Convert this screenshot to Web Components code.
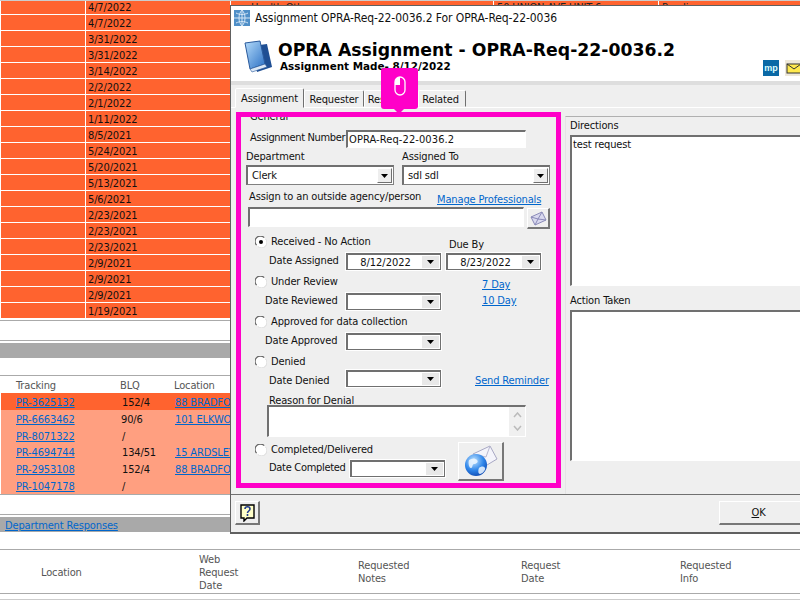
<!DOCTYPE html>
<html lang="en">
  <head>
    <meta charset="UTF-8" />
    <title>OPRA Assignment</title>
    <style>
      html, body { margin: 0; padding: 0; background: #fff; }
      body { width: 800px; height: 600px; overflow: hidden; position: relative; font: 11px 'DejaVu Sans Condensed', 'DejaVu Sans', sans-serif; font-stretch: condensed; letter-spacing: -0.14px; color: #111; }
    </style>
  </head>
  <body>
    <date-table></date-table>
    <gray-bar top="19" gap="2"></gray-bar>
    <tracking-table></tracking-table>
    <gray-bar top="19" gap="2" link="Department Responses"></gray-bar>
    <request-head></request-head>
    <assign-dialog></assign-dialog>
    <focus-frame></focus-frame>

    <script type="text/javascript">
      const LINK = 'color:#0066cc;text-decoration:underline;'

      class DateTable extends HTMLElement {
        constructor() {
          super()
          const dates = ['4/7/2022', '4/7/2022', '3/31/2022', '3/31/2022', '3/14/2022', '2/2/2022', '2/1/2022', '1/11/2022', '8/5/2021', '5/24/2021', '5/20/2021', '5/13/2021', '5/6/2021', '2/23/2021', '2/23/2021', '2/23/2021', '2/9/2021', '2/9/2021', '2/9/2021', '1/19/2021']
          const rows = dates
            .map((d, i) => {
              const extra = i === 0 ? ['Health Other', '50 UNION AVE UNIT 6', 'Pending'] : ['', '', '']
              return `<div class="row"><i></i><span>${d}</span><span class="x" style="padding-left:20px">${extra[0]}</span><span class="x">${extra[1]}</span><span class="x">${extra[2]}</span></div>`
            })
            .join('')
          this.attachShadow({ mode: 'open' })
          this.shadowRoot.innerHTML = `
            <style>
              :host { display: block; border-top: 1px solid #ccc; border-bottom: 1px solid #aaa; padding-left: 1px; height: 319px; }
              .row { display: grid; grid-template-columns: 84px 145px 263px 165px 1fr; height: 16px; background: #ff632f; border-bottom: 1px solid #fff; box-sizing: border-box; line-height: 17px; }
              .row:first-of-type { height: 14px; line-height: 14px; }
              .row > * { padding-left: 2px; border-left: 1px solid #fff; overflow: hidden; white-space: nowrap; }
              .row > i { border-left: 0; }
              .x { padding-left: 3px; color: #222; }
            </style>
            ${rows}
          `
        }
      }
      customElements.define('date-table', DateTable)

      class GrayBar extends HTMLElement {
        constructor() {
          super()
          this.attachShadow({ mode: 'open' })
        }
        connectedCallback() {
          const link = this.getAttribute('link')
          this.shadowRoot.innerHTML = `
            <style>
              :host { display: block; }
              .line { border-top: 1px solid #aaa; margin-top: ${this.getAttribute('top')}px; }
              .bar { background: #a9a9a9; height: 15px; margin-top: ${this.getAttribute('gap')}px; line-height: 17px; padding-left: 5px; }
              a { ${LINK} }
            </style>
            <div class="line"></div>
            <div class="bar">${link ? `<a href="#">${link}</a>` : ''}</div>
          `
        }
      }
      customElements.define('gray-bar', GrayBar)

      class TrackingTable extends HTMLElement {
        constructor() {
          super()
          const data = [
            ['PR-3625132', '152/4', '88 BRADFORD', 2],
            ['PR-6663462', '90/6', '101 ELKWOOD', 1],
            ['PR-8071322', '/', '', 2],
            ['PR-4694744', '134/51', '15 ARDSLEY', 2],
            ['PR-2953108', '152/4', '88 BRADFORD', 2],
            ['PR-1047178', '/', '', 2],
          ]
          const rows = data
            .map(
              (r, i) => `<div class="row ${i === 0 ? 'hot' : ''}"><a href="#">${r[0]}</a><span style="padding-left:${r[3]}px">${r[1]}</span><a href="#" class="addr">${r[2]}</a></div>`
            )
            .join('')
          this.attachShadow({ mode: 'open' })
          this.shadowRoot.innerHTML = `
            <style>
              :host { display: block; margin-top: 17px; border-top: 1px solid #aaa; padding-left: 1px; border-bottom: 1px solid #aaa; }
              .head, .row { display: grid; grid-template-columns: 104px 54px 1fr; padding-left: 15px; white-space: nowrap; overflow: hidden; }
              .head { height: 17px; line-height: 19px; color: #555; }
              .row { height: 16.8px; line-height: 19px; background: #ff9f80; }
              .row.hot { background: #ff632f; }
              a { ${LINK} justify-self: start; }
              .addr { margin-left: 1px; }
            </style>
            <div class="head"><span>Tracking</span><span>BLQ</span><span>Location</span></div>
            ${rows}
          `
        }
      }
      customElements.define('tracking-table', TrackingTable)

      class RequestHead extends HTMLElement {
        constructor() {
          super()
          this.attachShadow({ mode: 'open' })
          this.shadowRoot.innerHTML = `
            <style>
              :host { display: grid; grid-template-columns: 199px 159px 163px 159px 1fr; align-items: center; margin-top: 17px; height: 43px; box-sizing: content-box; border-top: 1px solid #aaa; border-bottom: 1px solid #aaa; color: #555; line-height: 13px; }
              span { position: relative; top: 1px; }
              span:first-of-type { padding-left: 41px; }
              :host::after { content: ''; position: absolute; left: 0; right: 0; top: 599px; border-top: 1px solid #ccc; }
            </style>
            <span>Location</span>
            <span>Web<br />Request<br />Date</span>
            <span>Requested<br />Notes</span>
            <span>Request<br />Date</span>
            <span>Requested<br />Info</span>
          `
        }
      }
      customElements.define('request-head', RequestHead)

      const SUNKEN = 'border-style:solid;border-width:2px 1px 1px 2px;border-color:#707070 #fff #fff #707070;box-sizing:border-box;background:#fff;'
      const ARROW = `<svg width="7" height="4" viewBox="0 0 7 4"><path d="M0 0h7L3.5 4z" fill="#000"/></svg>`

      class WinSelect extends HTMLElement {
        constructor() {
          super()
          this.attachShadow({ mode: 'open' })
          this.shadowRoot.innerHTML = `
            <style>
              :host { ${SUNKEN} display: flex; align-items: center; width: 148px; height: 20px; border-right-color: #808080; border-bottom-color: #808080; }
              .t { flex: 1; padding-left: 4px; white-space: nowrap; overflow: hidden; }
              .b { width: 15px; height: 15px; background: #eee; border: 1px solid; border-color: #fff #707070 #707070 #fff; display: flex; align-items: center; justify-content: center; box-sizing: border-box; margin-right: 1px; }
            </style>
            <span class="t"><slot></slot></span>
            <span class="b">${ARROW}</span>
          `
        }
      }
      customElements.define('win-select', WinSelect)

      class WinDate extends HTMLElement {
        constructor() {
          super()
          this.attachShadow({ mode: 'open' })
          this.shadowRoot.innerHTML = `
            <style>
              :host { ${SUNKEN} display: flex; align-items: center; flex: none; width: 95px; height: 17px; border-right-color: #707070; border-bottom-color: #707070; outline: 1px solid #fff; outline-offset: 0; }
              .t { flex: 1; text-align: center; white-space: nowrap; padding-left: 1px; line-height: 13px; letter-spacing: 0; }
              .b { width: 17px; height: 12px; background: #e8e8e8; display: flex; align-items: center; justify-content: center; margin-right: 1px; }
            </style>
            <span class="t"><slot></slot></span>
            <span class="b">${ARROW}</span>
          `
        }
      }
      customElements.define('win-date', WinDate)

      class WinRadio extends HTMLElement {
        constructor() {
          super()
          this.attachShadow({ mode: 'open' })
          const dot = this.hasAttribute('checked') ? '<circle cx="6" cy="6" r="2" fill="#000"/>' : ''
          this.shadowRoot.innerHTML = `
            <style>
              :host { display: flex; align-items: center; height: 12px; gap: 4px; margin-top: 1px; white-space: nowrap; }
              svg { flex: none; }
            </style>
            <svg width="12" height="12" viewBox="0 0 12 12">
              <circle cx="6" cy="6" r="5.5" fill="#fff"/>
              <path d="M1.6 9.2A5.3 5.3 0 0 1 9.2 1.6" fill="none" stroke="#666" stroke-width="1.2"/>
              <path d="M10.4 2.8A5.3 5.3 0 0 1 2.8 10.4" fill="none" stroke="#ddd" stroke-width="1"/>
              ${dot}
            </svg>
            <slot></slot>
          `
        }
      }
      customElements.define('win-radio', WinRadio)

      class WinTabs extends HTMLElement {
        constructor() {
          super()
          this.attachShadow({ mode: 'open' })
          this.shadowRoot.innerHTML = `
            <style>
              :host { display: flex; align-items: flex-end; height: 20px; padding-left: 4px; line-height: 18px; }
              span { display: block; height: 17px; box-sizing: border-box; border: 1px solid; border-color: #fff #707070 transparent #fff; border-radius: 2px 2px 0 0; text-align: center; }
              .on { height: 20px; line-height: 19px; background: #efefef; position: relative; top: 1px; z-index: 1; }
            </style>
            <span class="on" style="width:69px">Assignment</span>
            <span style="width:60px">Requester</span>
            <span style="width:54px">Response</span>
            <span style="width:48px;padding-right:3px">Related</span>
          `
        }
      }
      customElements.define('win-tabs', WinTabs)

      class AssignForm extends HTMLElement {
        constructor() {
          super()
          this.attachShadow({ mode: 'open' })
          this.shadowRoot.innerHTML = `
            <style>
              :host { display: block; width: 325px; padding-top: 3px; flex: none; line-height: 12px; }
              .r { display: flex; align-items: flex-start; white-space: nowrap; }
              a { ${LINK} }
              .in { ${SUNKEN} line-height: 15px; padding-left: 1px; letter-spacing: 0.1px; }
              .lb { display: block; flex: none; padding-top: 2px; }
            </style>
            <div class="r" style="height:12px;padding-left:14px">General</div>

            <div class="r" style="height:18px;margin-top:7px;padding-left:14px">
              <span style="width:96px;padding-top:2px;letter-spacing:-0.35px">Assignment Number</span>
              <span class="in" style="width:180px;height:18px">OPRA-Req-22-0036.2</span>
            </div>

            <div class="r" style="height:12px;margin-top:2px;padding-left:10px">
              <span style="width:156px;padding-top:1px">Department</span><span style="padding-top:1px">Assigned To</span>
            </div>

            <div class="r" style="height:20px;margin-top:3px;padding-left:10px;gap:8px">
              <win-select>Clerk</win-select><win-select>sdl sdl</win-select>
            </div>

            <div class="r" style="height:14px;margin-top:5px;padding-left:13px">
              <span style="width:188px;padding-top:1px">Assign to an outside agency/person</span>
              <a href="#" style="margin-top:4px">Manage Professionals</a>
            </div>

            <div class="r" style="height:22px;margin-top:3px;padding-left:12px">
              <span class="in" style="width:276px;height:20px"></span>
              <mail-button style="margin:1px 0 0 3px"></mail-button>
            </div>

            <div class="r" style="height:16px;margin-top:6px;padding-left:19px">
              <win-radio checked style="width:194px">Received - No Action</win-radio>
              <span style="margin-top:4px">Due By</span>
            </div>

            <div class="r" style="height:16px;margin-top:2px;padding-left:33px">
              <span class="lb" style="width:77px">Date Assigned</span>
              <win-date>8/12/2022</win-date>
              <win-date style="margin-left:5px">8/23/2022</win-date>
            </div>

            <div class="r" style="height:16px;margin-top:6px;padding-left:19px">
              <win-radio style="width:227px">Under Review</win-radio>
              <a href="#" style="margin-top:4px">7 Day</a>
            </div>

            <div class="r" style="height:16px;margin-top:2px;padding-left:29px">
              <span class="lb" style="width:81px">Date Reviewed</span>
              <win-date></win-date>
              <a href="#" style="margin:2px 0 0 41px">10 Day</a>
            </div>

            <div class="r" style="height:12px;margin-top:6px;padding-left:19px">
              <win-radio>Approved for data collection</win-radio>
            </div>

            <div class="r" style="height:16px;margin-top:6px;padding-left:29px">
              <span class="lb" style="width:81px">Date Approved</span>
              <win-date></win-date>
            </div>

            <div class="r" style="height:12px;margin-top:6px;padding-left:19px">
              <win-radio>Denied</win-radio>
            </div>

            <div class="r" style="height:16px;margin-top:3px;padding-left:33px">
              <span class="lb" style="width:77px;padding-top:5px">Date Denied</span>
              <win-date></win-date>
              <a href="#" style="margin:5px 0 0 34px">Send Reminder</a>
            </div>

            <div class="r" style="height:11px;margin-top:8px;padding-left:33px;padding-top:1px;box-sizing:border-box">Reason for Denial</div>

            <div class="r" style="height:32px;padding-left:31px">
              <scroll-box style="width:259px;height:32px"></scroll-box>
            </div>

            <div class="r" style="height:39px;margin-top:5px">
              <div style="width:222px;flex:none">
                <div class="r" style="height:12px;margin-top:1px;padding-left:19px">
                  <win-radio>Completed/Delivered</win-radio>
                </div>
                <div class="r" style="height:16px;margin-top:5px;padding-left:33px">
                  <span class="lb" style="width:81px;letter-spacing:-0.3px">Date Completed</span>
                  <win-date></win-date>
                </div>
              </div>
              <send-button></send-button>
            </div>
          `
        }
      }
      customElements.define('assign-form', AssignForm)

      class ScrollBox extends HTMLElement {
        constructor() {
          super()
          this.attachShadow({ mode: 'open' })
          this.shadowRoot.innerHTML = `
            <style>
              :host { ${SUNKEN} display: flex; justify-content: flex-end; }
              .s { width: 16px; background: #f0f0f0; display: flex; flex-direction: column; justify-content: space-between; align-items: center; padding: 5px 0; box-sizing: border-box; }
            </style>
            <div class="s">
              <svg width="9" height="6"><path d="M1 5l3.5-4L8 5" fill="none" stroke="#bbb" stroke-width="1.5"/></svg>
              <svg width="9" height="6"><path d="M1 1l3.5 4L8 1" fill="none" stroke="#bbb" stroke-width="1.5"/></svg>
            </div>
          `
        }
      }
      customElements.define('scroll-box', ScrollBox)

      const RAISED = 'box-sizing:border-box;background:#efefef;border:1px solid;border-width:1px 2px 2px 1px;border-color:#fff #777 #777 #fff;display:flex;align-items:center;justify-content:center;'

      class MailButton extends HTMLElement {
        constructor() {
          super()
          this.attachShadow({ mode: 'open' })
          this.shadowRoot.innerHTML = `
            <style>:host { ${RAISED} width: 23px; height: 21px; flex: none; }</style>
            <svg width="17" height="15" viewBox="0 0 17 15">
              <path d="M1 6 12 1l4 8-11 5z" fill="#d8d8ee" stroke="#8a8ab8"/>
              <path d="M1 6l7 2 4-7M5 14l3-6 8 1" fill="none" stroke="#8a8ab8"/>
            </svg>
          `
        }
      }
      customElements.define('mail-button', MailButton)

      class SendButton extends HTMLElement {
        constructor() {
          super()
          this.attachShadow({ mode: 'open' })
          this.shadowRoot.innerHTML = `
            <style>:host { ${RAISED} width: 46px; height: 39px; flex: none; }</style>
            <svg width="34" height="32" viewBox="0 0 34 32">
              <defs>
                <radialGradient id="g" cx=".4" cy=".3" r=".8"><stop offset="0" stop-color="#bfe3ff"/><stop offset=".55" stop-color="#2f86ea"/><stop offset="1" stop-color="#0a3fa8"/></radialGradient>
              </defs>
              <path d="M9 9 26 1l7 13-15 9z" fill="#f4f4fb" stroke="#a8a8c4"/>
              <path d="M9 9l13 3 4-11" fill="none" stroke="#b8b8d0"/>
              <circle cx="12" cy="20" r="11" fill="url(#g)"/>
              <path d="M5 15c3-2 6-2 8 0s-1 4-3 4-1 4-3 4-3-5-2-8zM15 23c2-2 5-2 6 0s-3 6-5 6-2-4-1-6z" fill="#eef7ff" opacity=".85"/>
            </svg>
          `
        }
      }
      customElements.define('send-button', SendButton)

      class AssignDialog extends HTMLElement {
        constructor() {
          super()
          this.attachShadow({ mode: 'open' })
          this.shadowRoot.innerHTML = `
            <style>
              :host { position: absolute; left: 230px; top: 5px; width: 570px; height: 529px; box-sizing: border-box; border: 1px solid #606060; border-right: 0; border-bottom-width: 2px; background: #efefef; display: flex; flex-direction: column; overflow: hidden; }
              .head { height: 75px; background: #fff; flex: none; }
              .cap { display: flex; align-items: center; height: 24px; gap: 5px; padding-left: 3px; font-size: 12px; letter-spacing: -0.08px; }
              .main { display: flex; height: 46px; padding-left: 12px; gap: 5px; position: relative; letter-spacing: 0; }
              h1 { margin: 0; font: bold 17.25px/20px 'DejaVu Sans', sans-serif; color: #000; white-space: nowrap; padding-top: 10px; }
              p { margin: 0; font: bold 10.4px/12px 'DejaVu Sans', sans-serif; color: #000; padding-left: 2px; white-space: nowrap; }
              .marks { position: absolute; left: 532px; top: 30px; display: flex; gap: 6px; }
              .mp { width: 16px; height: 16px; background: #0a69a6; color: #dff; font: bold 9px/16px 'Liberation Sans', sans-serif; text-align: center; }
              .band { height: 4px; background: #dedede; flex: none; }
              .tabs { height: 23px; flex: none; display: flex; flex-direction: column; justify-content: flex-end; border-bottom: 1px solid #fff; box-sizing: border-box; margin-bottom: 0; }
              .body { height: 386px; display: flex; flex: none; padding-left: 5px; }
              .side { flex: 1; margin-left: 4px; margin-top: 8px; border-top: 1px solid #b0b0b0; border-left: 1px solid #e4e4e4; padding-left: 4px; line-height: 12px; }
              .side div { height: 12px; margin-top: 3px; }
              .txt { display: block; box-sizing: border-box; width: 240px; border-style: solid; border-width: 2px 0 1px 2px; border-color: #707070 #fff #fff #707070; background: #fff; padding: 2px 0 0 1px; margin-left: 0; }
              .foot { flex: 1; border-top: 1px solid #707070; display: flex; justify-content: space-between; align-items: flex-start; padding: 6px 0 0 4px; }
              .help { ${RAISED} width: 25px; height: 24px; }
              .ok { ${RAISED} width: 81px; height: 24px; border-right: 0; padding-right: 3px; }
              u { text-decoration: underline; }
            </style>
            <div class="head">
              <div class="cap">
                <svg width="16" height="16" viewBox="0 0 16 16">
                  <rect width="16" height="16" fill="#4f8fc8"/>
                  <path d="M8 0v16M0 8h16M2 3c4 2 8 2 12 0M2 13c4-2 8-2 12 0M8 0C4 4 4 12 8 16M8 0c4 4 4 12 0 16" fill="none" stroke="#d4e6f6"/>
                </svg>
                <span>Assignment OPRA-Req-22-0036.2 For OPRA-Req-22-0036</span>
              </div>
              <div class="main">
                <svg width="30" height="33" viewBox="0 0 30 33" style="margin-top:10px;flex:none">
                  <defs><linearGradient id="b" x1="0" y1="0" x2="1" y2="1"><stop offset="0" stop-color="#b5dcfb"/><stop offset="1" stop-color="#2a6fc4"/></linearGradient></defs>
                  <path d="M9 6 24 4l5 23-15 5z" fill="#1f4f94"/>
                  <path d="M2 3 17 1l5 23-15 5z" fill="url(#b)" stroke="#2a5a9c"/>
                  <path d="M7 29l15-5 2 3-15 5z" fill="#dce8f6" stroke="#2a5a9c" stroke-width=".6"/>
                </svg>
                <div>
                  <h1>OPRA Assignment - OPRA-Req-22-0036.2</h1>
                  <p>Assignment Made- 8/12/2022</p>
                </div>
                <div class="marks">
                  <div class="mp">mp</div>
                  <svg width="16" height="16" viewBox="0 0 16 16">
                    <rect width="16" height="18" fill="#eee8d8"/>
                    <rect x="2" y="4" width="14" height="9" fill="#ffe94d" stroke="#333"/>
                    <path d="M2 4l7 5 7-5" fill="none" stroke="#333"/>
                  </svg>
                </div>
              </div>
            </div>
            <div class="band"></div>
            <div class="tabs"><win-tabs></win-tabs></div>
            <div class="body">
              <assign-form></assign-form>
              <div class="side">
                <div>Directions</div>
                <span class="txt" style="height:151px;margin-top:3px">test request</span>
                <div style="margin-top:9px">Action Taken</div>
                <span class="txt" style="height:151px;margin-top:3px"></span>
              </div>
            </div>
            <div class="foot">
              <div class="help">
                <svg width="15" height="18" viewBox="0 0 15 18">
                  <path d="M1 1h13v13H7l-3 3v-3H1z" fill="#ffffc8" stroke="#000" stroke-width="1.4"/>
                  <path d="M5 5c0-3 5-3 5 0 0 2-2.500 2-2.500 4M7.500 10v2" fill="none" stroke="#203a90" stroke-width="1.600"/>
                </svg>
              </div>
              <div class="ok"><span><u>O</u>K</span></div>
            </div>
          `
        }
      }
      customElements.define('assign-dialog', AssignDialog)

      class FocusFrame extends HTMLElement {
        constructor() {
          super()
          this.attachShadow({ mode: 'open' })
          this.shadowRoot.innerHTML = `
            <style>
              :host { position: absolute; left: 236px; top: 112px; width: 325px; height: 376px; box-sizing: border-box; border: 5px solid #ff00c8; pointer-events: none; }
              .tip { position: absolute; left: 140px; top: -49px; width: 37px; height: 41px; background: #ff00c8; border-radius: 3px; display: flex; justify-content: center; padding-top: 8px; box-sizing: border-box; }
              .tip::after { content: ''; position: absolute; left: 13px; bottom: -5px; border: 5px solid transparent; border-bottom: 0; border-top-color: #ff00c8; }
            </style>
            <div class="tip">
              <svg width="12" height="20" viewBox="0 0 12 20">
                <rect x="1" y="1" width="10" height="18" rx="5" fill="none" stroke="#fff" stroke-width="1.300"/>
                <path d="M6 1v8H1V6a5 5 0 0 1 5-5z" fill="#fff"/>
              </svg>
            </div>
          `
        }
      }
      customElements.define('focus-frame', FocusFrame)
    </script>
  </body>
</html>
